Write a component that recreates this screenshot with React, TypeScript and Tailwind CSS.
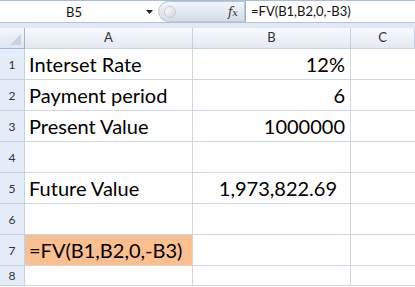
const rows: { n: number; a?: string; b?: string; bPad?: boolean; fill?: boolean; short?: boolean }[] = [
  { n: 1, a: 'Interset Rate', b: '12%' },
  { n: 2, a: 'Payment period', b: '6' },
  { n: 3, a: 'Present Value', b: '1000000' },
  { n: 4 },
  { n: 5, a: 'Future Value', b: '1,973,822.69', bPad: true },
  { n: 6 },
  { n: 7, a: '=FV(B1,B2,0,-B3)', fill: true },
  { n: 8, short: true },
]

export default function App() {
  return (
    <div className="h-[287px] w-[415px] overflow-hidden bg-white font-['Lato','Noto_Sans',sans-serif] text-black">
      <div className="h-[1px] bg-[#a7bcd9]" />
      {/* formula bar */}
      <div className="flex h-[22px] border-b border-[#b1c3db] bg-white">
        <div className="flex w-[140px] items-center justify-center pl-2 pt-[2px] text-[13px] text-[#111]">B5</div>
        <div className="flex w-[18px] items-center justify-center">
          <svg width="7" height="4" viewBox="0 0 7 4">
            <path d="M0 0h7L3.5 4z" fill="#222" />
          </svg>
        </div>
        <div className="flex w-[87px] items-center rounded-l-[11px] border border-[#b9c7d9] bg-gradient-to-b from-[#f4f7fb] via-[#e3e9f1] to-[#d4dce7]">
          <div className="ml-[5px] h-[12px] w-[12px] rounded-full border border-[#c3ccd6] bg-gradient-to-br from-white to-[#cfd6df]" />
          <span className="ml-auto mr-[6px] font-['DejaVu_Serif',serif] text-[12px] italic text-[#333]">
            f<span className="text-[10px]">x</span>
          </span>
        </div>
        <div className="flex flex-1 items-center border-l border-[#9fb0c6] pl-[5px] pt-[1px] text-[13px] text-[#111]">
          =FV(B1,B2,0,-B3)
        </div>
      </div>
      <div className="h-[5px] bg-[#dfe8f4]" />
      {/* sheet */}
      <div className="grid grid-cols-[25px_168px_158px_64px]">
        <div className="relative h-[21px] border-b border-r border-[#9eb6ce] bg-gradient-to-b from-[#f3f6fb] to-[#dfe6f0]">
          <svg className="absolute bottom-[3px] right-[3px]" width="11" height="11" viewBox="0 0 11 11">
            <path d="M11 0v11H0z" fill="#c4d3e6" />
          </svg>
        </div>
        {['A', 'B', 'C'].map((c) => (
          <div
            key={c}
            className="flex h-[21px] items-center justify-center border-b border-r border-[#c5d2e3] bg-gradient-to-b from-[#f7f9fc] to-[#e4eaf2] text-[13px] text-[#333]"
          >
            {c}
          </div>
        ))}
        {rows.map((r) => (
          <div key={r.n} className="contents">
            <div
              className={`flex justify-center border-b border-r border-[#c5d2e3] bg-[#e4ecf7] text-[12px] text-[#333] ${
                r.short ? 'h-[20px] items-center' : 'h-[31px] items-end pb-[5px]'
              }`}
            >
              {r.n}
            </div>
            <div
              className={`flex items-end whitespace-nowrap border-b border-r border-[#d0d7e5] pb-[5px] pl-[4px] text-[20px] leading-none ${
                r.short ? 'h-[20px]' : 'h-[31px]'
              } ${r.fill ? 'bg-[#fabf8f]' : ''}`}
            >
              {r.a}
            </div>
            <div
              className={`flex items-end justify-end whitespace-nowrap border-b border-r border-[#d0d7e5] pb-[5px] text-[20px] leading-none ${
                r.short ? 'h-[20px]' : 'h-[31px]'
              } ${r.bPad ? 'pr-[13px]' : 'pr-[5px]'}`}
            >
              {r.b}
            </div>
            <div className={`border-b border-[#d0d7e5] ${r.short ? 'h-[20px]' : 'h-[31px]'}`} />
          </div>
        ))}
      </div>
    </div>
  )
}
